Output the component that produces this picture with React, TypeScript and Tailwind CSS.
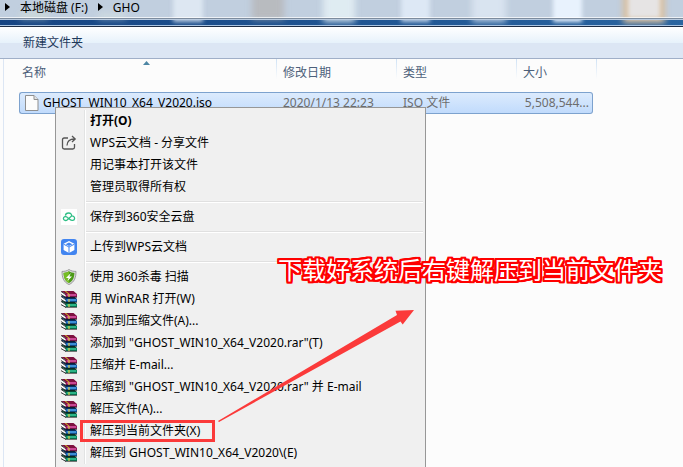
import React from "react";
import clsx from "clsx";

type MenuEntry = {
  label: string;
  icon?: React.ReactNode;
  bold?: boolean;
  marked?: boolean;
};

const ShareIcon = () => (
  <svg width="16" height="16" viewBox="0 0 16 16" fill="none" stroke="#555" strokeWidth="1.3">
    <path d="M7 3H3.2Q1.5 3 1.5 4.7V12.3Q1.5 14 3.2 14H11.8Q13.5 14 13.5 12.3V9" />
    <path d="M6 10.5C6 6.5 8.5 4 13.5 4M11 1l3.2 3L11 7" />
  </svg>
);

const CloudIcon = () => (
  <svg width="16" height="16" viewBox="0 0 16 16" fill="none" stroke="#2fbf86" strokeWidth="1.3">
    <rect width="16" height="16" fill="#fff" stroke="none" />
    <path d="M4.4 6.6C4.6 4.8 6 4 7.6 4C9.8 4 10.8 5.4 10.6 7L6.4 10.8C5 12 2.4 11.6 2.4 9.6C2.4 7.6 5 7 6.4 8.4L9 10.6C10.6 12 13.6 11.6 13.6 9.4C13.6 7.6 12 6.8 10.6 7" />
  </svg>
);

const BoxIcon = () => (
  <svg width="16" height="16" viewBox="0 0 16 16">
    <rect width="16" height="16" rx="3" fill="#4285f0" />
    <path d="M8 2L13.4 4.8V11L8 14L2.6 11V4.8Z" fill="#fff" />
    <path d="M8 3.6L11.4 5.3L8 7L4.6 5.3Z" fill="#4285f0" />
    <path d="M8 8V14M2.6 5.2L8 8L13.4 5.2" fill="none" stroke="#4285f0" strokeWidth="1" />
  </svg>
);

const ShieldIcon = () => (
  <svg width="16" height="16" viewBox="0 0 16 16">
    <path d="M8 0.5C10 2 12.5 2.4 15 2.4C15 8.5 13.5 13 8 15.6C2.5 13 1 8.5 1 2.4C3.5 2.4 6 2 8 0.5Z" fill="#d8d8d8" stroke="#8b8b8b" strokeWidth="0.8" />
    <path d="M8 2.2C9.8 3.4 11.6 3.8 13.4 3.9C13.2 8.6 12 12 8 14C4 12 2.8 8.6 2.6 3.9C4.4 3.8 6.2 3.4 8 2.2Z" fill="#4c9a16" />
    <path d="M8 2.2C6.2 3.4 4.4 3.8 2.6 3.9C2.8 8.6 4 12 8 14Z" fill="#76bd24" />
    <path d="M9.8 4L5 9H7.6L6.4 12L11 7.4H8.4Z" fill="#fff" />
  </svg>
);

// bottom book first, the ones above cover its top
const books = [
  { y: 10, top: "#064a38", face: "#0a8a62", shine: "#42d0a0" },
  { y: 5, top: "#0a2c60", face: "#1560b0", shine: "#58aef0" },
  { y: 0, top: "#7c1040", face: "#98185c", shine: "#e868b8" },
];

const RarIcon = () => (
  <svg width="16" height="17" viewBox="0 0 16 17">
    {books.map(({ y, top, face, shine }) => (
      <g key={y} transform={`translate(0 ${y})`}>
        {/* cover seen from above */}
        <path d="M0 0H12.5L16 3H4.5Z" fill={top} />
        {/* spine */}
        <path d="M4 3H16V6H4Z" fill={face} />
        <path d="M6 3.4H15V4.6H6Z" fill={shine} />
        {/* pages */}
        <path d="M0 0.8L4.6 4V6.4L0 3.6Z" fill="#fafafa" />
        <path d="M0 0.4L4.6 3.6M0 3.6L4.6 6.2" stroke="#222" strokeWidth="0.9" />
        <path d="M4 6.2H16" stroke="#111" strokeWidth="0.8" />
        <path d="M7.4 3H8.6V6H7.4Z" fill="#e0cc40" />
      </g>
    ))}
    <path d="M3.6 0H5L8.6 3H7.2Z" fill="#d4b820" />
  </svg>
);

const FileIcon = () => (
  <svg className="shrink-0" width="14" height="16" viewBox="0 0 14 16">
    <path d="M0.5 0.5H9L13 4.5V15.5H0.5Z" fill="#fcfcfc" stroke="#8f8f8f" />
    <path d="M9 0.5V4.5H13" fill="#e4e4e4" stroke="#8f8f8f" />
  </svg>
);

const CrumbArrow = () => (
  <svg width="5" height="8" viewBox="0 0 5 8">
    <path d="M0 0L5 4L0 8Z" fill="#000" />
  </svg>
);

const groups: MenuEntry[][] = [
  [
    { label: "打开(O)", bold: true },
    { label: "WPS云文档 - 分享文件", icon: <ShareIcon /> },
    { label: "用记事本打开该文件" },
    { label: "管理员取得所有权" },
  ],
  [{ label: "保存到360安全云盘", icon: <CloudIcon /> }],
  [{ label: "上传到WPS云文档", icon: <BoxIcon /> }],
  [
    { label: "使用 360杀毒 扫描", icon: <ShieldIcon /> },
    { label: "用 WinRAR 打开(W)", icon: <RarIcon /> },
    { label: "添加到压缩文件(A)...", icon: <RarIcon /> },
    { label: '添加到 "GHOST_WIN10_X64_V2020.rar"(T)', icon: <RarIcon /> },
    { label: "压缩并 E-mail...", icon: <RarIcon /> },
    { label: '压缩到 "GHOST_WIN10_X64_V2020.rar" 并 E-mail', icon: <RarIcon /> },
    { label: "解压文件(A)...", icon: <RarIcon /> },
    { label: "解压到当前文件夹(X)", icon: <RarIcon />, marked: true },
    { label: "解压到 GHOST_WIN10_X64_V2020\\(E)", icon: <RarIcon /> },
  ],
];

// desktop icons showing through the window frame
function GlassBlurs() {
  return (
    <div className="absolute inset-0 overflow-hidden">
      <div className="absolute top-3 left-5 h-2 w-7 bg-[#dce7cf]/40 blur-[3px]" />
      <div className="absolute top-3 left-[98px] h-2 w-7 bg-[#dfe9e4]/40 blur-[3px]" />
      <div className="absolute -top-2 left-[173px] h-[30px] w-[30px] bg-[#e3ecf6]/80 blur-[2px]" />
      <div className="absolute -top-2 left-[252px] h-7 w-8 bg-[#b3aeaa]/60 blur-[3px]" />
      <div className="absolute -top-2 left-[323px] h-[30px] w-8 bg-[#e2eef4]/90 blur-[3px]" />
      <div className="absolute -top-2 left-[401px] h-[30px] w-[29px] bg-[#e4eefa]/80 blur-[2px]" />
      <div className="absolute -top-2 left-[472px] h-[30px] w-[34px] bg-[#dfe8f4]/80 blur-[3px]" />
      <div className="absolute -top-2 left-[553px] h-[30px] w-[29px] bg-[#e8f2fd] blur-[2px]" />
      <div className="absolute -top-2 left-[623px] h-[31px] w-[42px] bg-[#d9bf9e] blur-[3px]" />
      <div className="absolute -top-2 left-[628px] h-[26px] w-8 bg-[#e6e4e4] blur-[2px]" />
    </div>
  );
}

function AddressBar() {
  return (
    <header className="relative bg-linear-to-r from-[#174583] to-[#2a65a0]">
      <div className="absolute inset-x-0 top-0 h-[18px] bg-[#c1cfdf]" />
      <GlassBlurs />
      <nav className="relative flex h-[18px] items-start gap-[10px] border-b border-white/70 pl-[5px] text-black">
        <span className="flex h-[14px] items-center"><CrumbArrow /></span>
        <a href="#disk">本地磁盘 (F:)</a>
        <span className="flex h-[14px] items-center"><CrumbArrow /></span>
        <a href="#gho">GHO</a>
      </nav>
      <div className="relative h-[9px] border-t border-b border-t-[#7d8c9e] border-b-[#1c2c44]">
        <div className="h-full border-t border-b border-t-[#b9cbe0] border-b-[#a9c4e2]" />
      </div>
    </header>
  );
}

function FileTable() {
  const divider = "bg-[linear-gradient(#cfe2f5,#fcfcfc)] bg-[length:1px_20px] bg-right-top bg-no-repeat";
  const head = "h-[33px] p-0 pb-[5px] text-left font-normal";
  const cell = "h-[22px] border-y border-[#7da2ce] bg-linear-to-b from-[#dcebfd] to-[#c1dbfc] p-0 whitespace-nowrap";
  return (
    <table className="ml-[15px] w-[574px] table-fixed border-separate border-spacing-0">
      <thead className="text-[#4c607a]">
        <tr>
          <th className={clsx(head, divider, "relative w-[258px] pl-[3px]")}>
            名称
            <svg className="absolute top-[2px] left-[124px]" width="7" height="4" viewBox="0 0 7 4">
              <path d="M0 4L3.5 0L7 4Z" fill="#4d86a4" />
            </svg>
          </th>
          <th className={clsx(head, divider, "w-[120px] pl-[6px]")}>修改日期</th>
          <th className={clsx(head, divider, "w-[120px] pl-[6px]")}>类型</th>
          <th className={clsx(head, "relative pl-[6px]")}>
            大小
            <span className={clsx(divider, "absolute top-0 -right-1 h-5 w-px")} />
          </th>
        </tr>
      </thead>
      <tbody className="text-[#6d6d6d]">
        <tr>
          <td className={clsx(cell, "rounded-l-[3px] border-l pl-[5px]")}>
            <span className="flex items-center gap-1 text-black">
              <FileIcon />
              GHOST_WIN10_X64_V2020.iso
            </span>
          </td>
          <td className={clsx(cell, "pl-[6px]")}>2020/1/13 22:23</td>
          <td className={clsx(cell, "pl-[6px]")}>ISO 文件</td>
          <td className={clsx(cell, "rounded-r-[3px] border-r pr-[3px] text-right")}>5,508,544...</td>
        </tr>
      </tbody>
    </table>
  );
}

function ContextMenu() {
  return (
    <div
      role="menu"
      className="absolute top-[107px] left-[55px] w-[371px] border border-[#979797] bg-[#f0f0f0] p-[2px] pb-6"
    >
      {groups.map((group, i) => (
        <div key={i}>
          {i > 0 && (
            <div className="flex h-2">
              <div className="w-[27px] border-r border-[#e2e3e3]" />
              <div className="flex flex-1 items-center border-l border-white">
                <div className="h-[2px] flex-1 border-t border-[#e0e0e0] bg-white" />
              </div>
            </div>
          )}
          {group.map((entry) => (
            <button key={entry.label} role="menuitem" className="flex h-[22px] w-full items-stretch text-left">
              <span className="flex w-[27px] items-center border-r border-[#e2e3e3] pl-[3px]">
                {entry.icon}
              </span>
              <span className="flex items-center border-l border-white">
                <span
                  className={clsx(
                    "whitespace-nowrap",
                    entry.bold && "font-bold",
                    entry.marked
                      ? "-ml-[6px] flex h-[22px] items-center border-[3px] border-[#fb3a3a] pr-3 pl-[7px]"
                      : "pl-1"
                  )}
                >
                  {entry.label}
                </span>
              </span>
            </button>
          ))}
        </div>
      ))}
    </div>
  );
}

export default function App() {
  return (
    <div className="relative h-screen overflow-hidden bg-[#fcfcfc] font-['Noto_Sans','Noto_Sans_CJK_SC',sans-serif] text-[12px] leading-4 text-black">
      <AddressBar />
      <div className="flex h-8 items-center border-b border-[#a0afc8] bg-[linear-gradient(#fff,#e7f2fb_50%,#dce6f4_50%,#dce6f4)] pl-[23px] text-[#1e395b]">
        <button>新建文件夹</button>
      </div>
      <main className="ml-[3px] min-h-screen border-l border-[#dce6f4]">
        <FileTable />
      </main>
      <ContextMenu />
      <svg className="absolute top-[300px] left-[215px]" width="205" height="125" viewBox="215 300 205 125">
        <path d="M218 421L397 315L395.5 310.8L414 310L402.7 324.5L400.5 321.5L219 422Z" fill="#fb3a3a" />
      </svg>
      <p className="absolute top-[254px] left-[278px] text-[24px] leading-8 whitespace-nowrap text-white [text-shadow:2px_0_#f00,-2px_0_#f00,0_2px_#f00,0_-2px_#f00,2px_1px_#f00,2px_-1px_#f00,-2px_1px_#f00,-2px_-1px_#f00,1px_2px_#f00,1px_-2px_#f00,-1px_2px_#f00,-1px_-2px_#f00,2px_2px_#f00,-2px_2px_#f00,2px_-2px_#f00,-2px_-2px_#f00]">
        下载好系统后右键解压到当前文件夹
      </p>
    </div>
  );
}
